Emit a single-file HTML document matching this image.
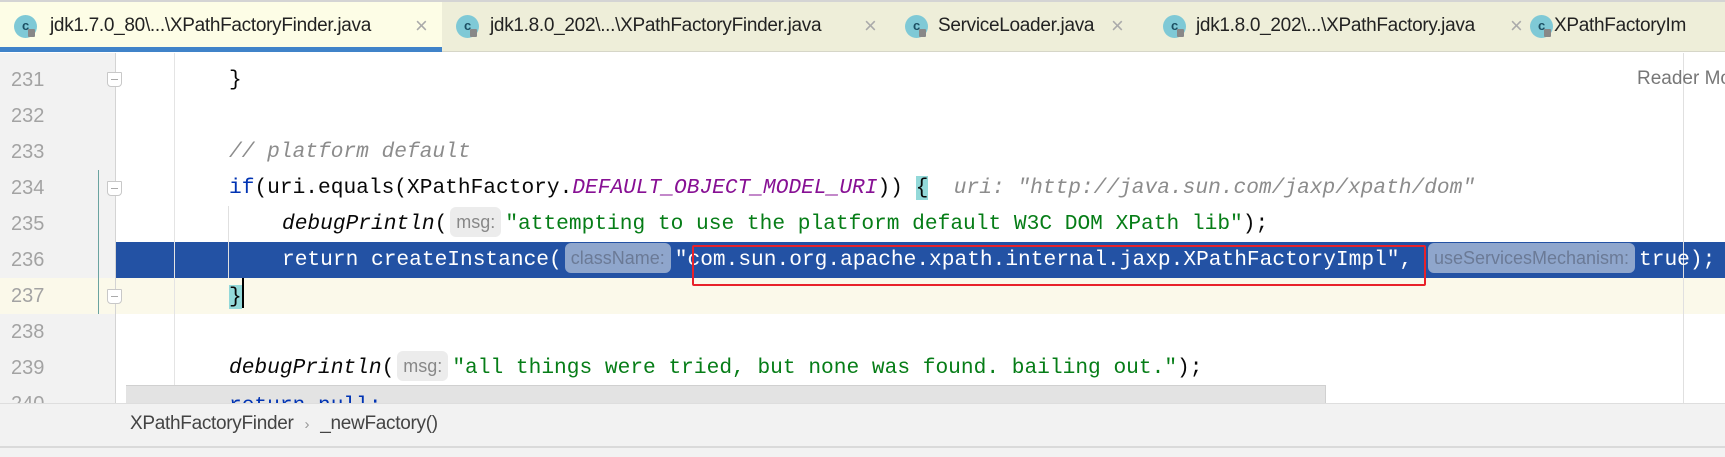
<!DOCTYPE html>
<html><head><meta charset="utf-8"><style>
*{margin:0;padding:0;box-sizing:border-box}
body{width:1725px;height:457px;overflow:hidden;background:#fff;position:relative;font-family:"Liberation Sans",sans-serif}
.tabs{position:absolute;left:0;top:0;width:1725px;height:52px;background:#eeeed9;border-top:2px solid #d4d4d4;border-bottom:1px solid #d6d6c8;z-index:5}
.tab{position:absolute;top:0;height:50px;font-size:19px;color:#222;line-height:48px;white-space:nowrap;letter-spacing:-0.3px}
.act{left:0;width:442px;background:#fdfde6;border-bottom:5px solid #4083c9}
.ic{position:absolute;top:13px;width:23px;height:23px;border-radius:50%;background:#7fc9d6;color:#1c4f63;font-size:13px;line-height:22px;text-align:center;font-weight:bold}
.ic:after{content:"";position:absolute;left:14px;top:14px;width:7px;height:8px;background:#888;border-radius:1px}
.x{position:absolute;top:0;color:#aaa;font-size:22px}
.code{position:absolute;font-family:"Liberation Mono",monospace;font-size:21.2px;white-space:pre;color:#080808;line-height:36px;height:36px;z-index:2}
.num{position:absolute;left:11px;font-size:20px;color:#a3a3a3;line-height:36px}
.it{font-style:italic}
.str{color:#067d17}
.kw{color:#0033b3}
.pur{color:#871094;font-style:italic}
.cm{color:#8c8c8c;font-style:italic}
.pill{display:inline-block;font-family:"Liberation Sans",sans-serif;font-size:18px;background:#ececec;color:#888;border-radius:6px;padding:0 6px;line-height:30px;vertical-align:1px;margin:0 4px 0 3px}
.pb{background:#8fa6cc;color:#6b7a96}
.fold{position:absolute;left:107px;width:15px;height:15px;border:1px solid #c8c8c8;background:#fff;border-radius:1px 1px 4px 4px}
.fold:after{content:"";position:absolute;left:3px;top:6px;width:7px;height:1px;background:#aaa}
</style></head><body>
<div class="tabs">
 <div class="tab act"><div class="ic" style="left:14px">c</div><span style="position:absolute;left:50px">jdk1.7.0_80\...\XPathFactoryFinder.java</span><span class="x" style="left:415px">×</span></div>
 <div class="tab" style="left:0;width:1725px">
  <div class="ic" style="left:456px">c</div><span style="position:absolute;left:490px">jdk1.8.0_202\...\XPathFactoryFinder.java</span><span class="x" style="left:864px">×</span>
  <div class="ic" style="left:905px">c</div><span style="position:absolute;left:938px">ServiceLoader.java</span><span class="x" style="left:1111px">×</span>
  <div class="ic" style="left:1163px">c</div><span style="position:absolute;left:1196px">jdk1.8.0_202\...\XPathFactory.java</span><span class="x" style="left:1510px">×</span>
  <div class="ic" style="left:1530px">c</div><span style="position:absolute;left:1554px">XPathFactoryIm</span>
 </div>
</div>
<div style="position:absolute;left:0;top:53px;width:115px;height:350px;background:#f2f2f2"></div>
<div style="position:absolute;left:0;top:278px;width:1725px;height:36px;background:#fbf9ea"></div>
<div style="position:absolute;left:115px;top:242px;width:1610px;height:36px;background:#2352a4"></div>
<div style="position:absolute;left:115px;top:53px;width:1px;height:350px;background:#d4d4d4"></div>
<div style="position:absolute;left:174px;top:53px;width:1px;height:350px;background:#e4e4e4"></div>
<div style="position:absolute;left:228px;top:206px;width:1px;height:72px;background:#e0e0e0"></div>
<div style="position:absolute;left:1683px;top:53px;width:1px;height:350px;background:#e0e0e0"></div>
<div style="position:absolute;left:98px;top:170px;width:1px;height:144px;background:#6aa3a0"></div>

<div class="num" style="top:62px">231</div>
<div class="num" style="top:98px">232</div>
<div class="num" style="top:134px">233</div>
<div class="num" style="top:170px">234</div>
<div class="num" style="top:206px">235</div>
<div class="num" style="top:242px">236</div>
<div class="num" style="top:278px">237</div>
<div class="num" style="top:314px">238</div>
<div class="num" style="top:350px">239</div>
<div class="num" style="top:386px">240</div>
<div class="fold" style="top:72px"></div>
<div class="fold" style="top:181px"></div>
<div class="fold" style="top:289px"></div>

<div class="code" style="left:229px;top:62px">}</div>
<div class="code cm" style="left:229px;top:134px">// platform default</div>
<div class="code" style="left:229px;top:170px"><span class="kw">if</span>(uri.equals(XPathFactory.<span class="pur">DEFAULT_OBJECT_MODEL_URI</span>)) <span style="background:#93d9d9">{</span>  <span class="cm">uri: "http://java.sun.com/jaxp/xpath/dom"</span></div>
<div class="code" style="left:282px;top:206px"><span class="it">debugPrintln</span>(<span class="pill">msg:</span><span class="str">"attempting to use the platform default W3C DOM XPath lib"</span>);</div>
<div class="code" style="left:282px;top:242px;color:#fff">return createInstance(<span class="pill pb">className:</span>"com.sun.org.apache.xpath.internal.jaxp.XPathFactoryImpl", <span class="pill pb">useServicesMechanism:</span>true);</div>
<div style="position:absolute;left:692px;top:245px;width:734px;height:41px;border:2px solid #e8222a;border-radius:2px;z-index:3"></div>
<div class="code" style="left:229px;top:278px"><span style="background:#93d9d9">}</span><span style="display:inline-block;width:2px;height:30px;background:#000;vertical-align:-6px"></span></div>
<div class="code" style="left:229px;top:350px"><span class="it">debugPrintln</span>(<span class="pill">msg:</span><span class="str">"all things were tried, but none was found. bailing out."</span>);</div>
<div style="position:absolute;left:126px;top:385px;width:1200px;height:20px;background:#e3e3e3;border-top:1px solid #d0d0d0;border-right:1px solid #d0d0d0;z-index:1"></div>
<div class="code kw" style="left:229px;top:388px">return null;</div>
<div style="position:absolute;left:1637px;top:68px;font-size:19px;color:#777;white-space:nowrap">Reader Mode</div>
<div style="position:absolute;left:0;top:403px;width:1725px;height:54px;background:#f2f2f2;border-top:1px solid #dedede;z-index:4"></div>
<div style="position:absolute;left:0;top:446px;width:1725px;height:2px;background:#dadada;z-index:4"></div>
<div style="position:absolute;left:130px;top:413px;font-size:19px;color:#444;letter-spacing:-0.3px;z-index:5">XPathFactoryFinder <span style="color:#999;font-size:15px;margin:0 6px">›</span> _newFactory()</div>
</body></html>
